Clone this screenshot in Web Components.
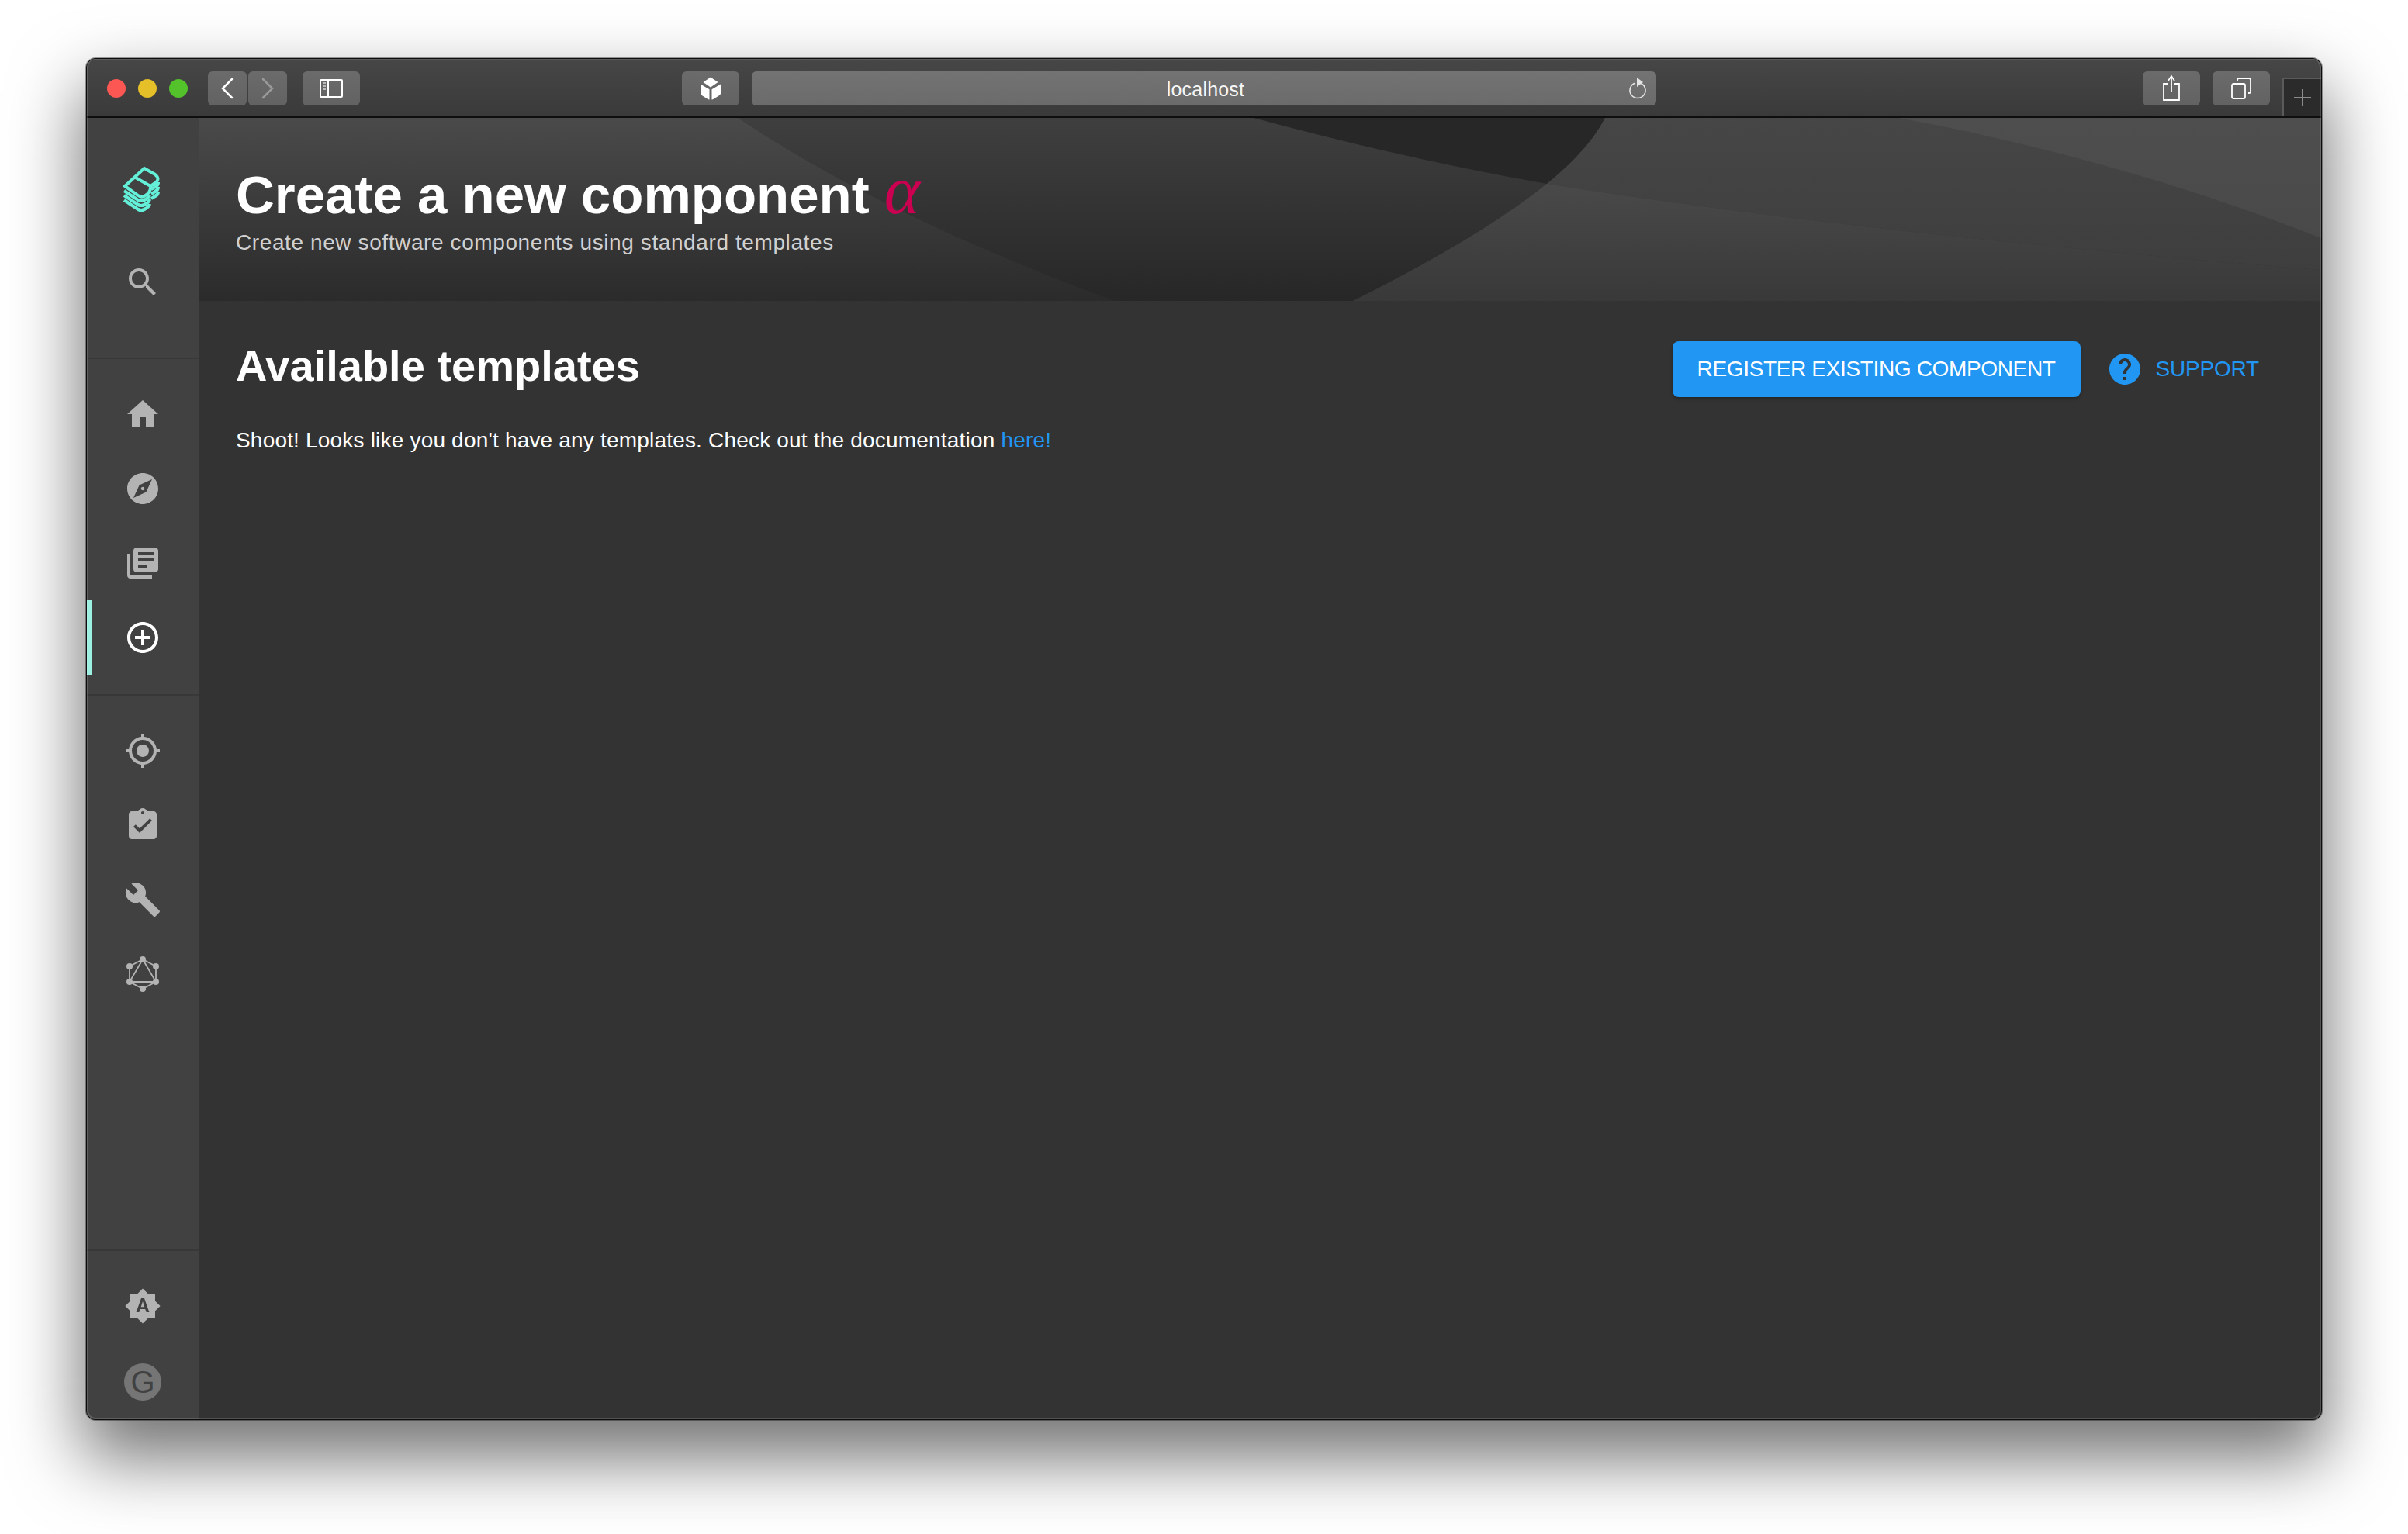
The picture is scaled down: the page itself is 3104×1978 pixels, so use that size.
<!DOCTYPE html>
<html>
<head>
<meta charset="utf-8">
<title>Create a new component</title>
<style>
html,body{margin:0;padding:0;background:#fff;height:100%;overflow:hidden;}
body{font-family:"Liberation Sans",Arial,sans-serif;}
</style>
</head>
<body>
<mac-window>
    <browser-bar slot="bar"></browser-bar>
    <side-nav slot="side"></side-nav>
    <page-header slot="head" title="Create a new component" subtitle="Create new software components using standard templates"></page-header>
    <templates-page slot="main"></templates-page>
</mac-window>

<script>
const ICONS = {
    search:'M15.5 14h-.79l-.28-.27C15.41 12.59 16 11.11 16 9.5 16 5.91 13.09 3 9.5 3S3 5.91 3 9.5 5.91 16 9.5 16c1.61 0 3.09-.59 4.23-1.57l.27.28v.79l5 4.99L20.49 19l-4.99-5zm-6 0C7.01 14 5 11.99 5 9.5S7.01 5 9.5 5 14 7.01 14 9.5 11.99 14 9.5 14z',
    home:'M10 20v-6h4v6h5v-8h3L12 3 2 12h3v8z',
    explore:'M12 10.9c-.61 0-1.1.49-1.1 1.1s.49 1.1 1.1 1.1c.61 0 1.1-.49 1.1-1.1s-.49-1.1-1.1-1.1zM12 2C6.48 2 2 6.48 2 12s4.48 10 10 10 10-4.48 10-10S17.52 2 12 2zm2.19 12.19L6 18l3.81-8.19L18 6l-3.81 8.19z',
    library:'M4 6H2v14c0 1.1.9 2 2 2h14v-2H4V6zm16-4H8c-1.1 0-2 .9-2 2v12c0 1.1.9 2 2 2h12c1.1 0 2-.9 2-2V4c0-1.1-.9-2-2-2zm-1 9H9V9h10v2zm-4 4H9v-2h6v2zm4-8H9V5h10v2z',
    add:'M13 7h-2v4H7v2h4v4h2v-4h4v-2h-4V7zm-1-5C6.48 2 2 6.48 2 12s4.48 10 10 10 10-4.48 10-10S17.52 2 12 2zm0 18c-4.41 0-8-3.59-8-8s3.59-8 8-8 8 3.59 8 8-3.59 8-8 8z',
    gps:'M12 8c-2.21 0-4 1.79-4 4s1.79 4 4 4 4-1.79 4-4-1.79-4-4-4zm8.94 3c-.46-4.17-3.77-7.48-7.94-7.94V1h-2v2.06C6.83 3.52 3.52 6.83 3.06 11H1v2h2.06c.46 4.17 3.77 7.48 7.94 7.94V23h2v-2.06c4.17-.46 7.48-3.77 7.94-7.94H23v-2h-2.06zM12 19c-3.87 0-7-3.13-7-7s3.13-7 7-7 7 3.13 7 7-3.13 7-7 7z',
    assignment:'M19 3h-4.18C14.4 1.84 13.3 1 12 1c-1.3 0-2.4.84-2.82 2H5c-1.1 0-2 .9-2 2v14c0 1.1.9 2 2 2h14c1.1 0 2-.9 2-2V5c0-1.1-.9-2-2-2zm-7 0c.55 0 1 .45 1 1s-.45 1-1 1-1-.45-1-1 .45-1 1-1zm-2 14l-4-4 1.41-1.41L10 14.17l6.59-6.59L18 9l-8 8z',
    build:'M22.7 19l-9.1-9.1c.9-2.3.4-5-1.5-6.9-2-2-5-2.4-7.4-1.3L9 6 6 9 1.6 4.7C.4 7.1.9 10.1 2.9 12.1c1.9 1.9 4.6 2.4 6.9 1.5l9.1 9.1c.4.4 1 .4 1.4 0l2.3-2.3c.5-.4.5-1.1.1-1.4z',
    brightness:'M10.85 12.65h2.3L12 9l-1.15 3.65zM20 8.69V4h-4.69L12 .69 8.69 4H4v4.69L.69 12 4 15.31V20h4.69L12 23.31 15.31 20H20v-4.69L23.31 12 20 8.69zM14.3 16l-.7-2h-3.2l-.7 2H7.8L11 7h2l3.2 9h-1.9z',
    help:'M12 2C6.48 2 2 6.48 2 12s4.48 10 10 10 10-4.48 10-10S17.52 2 12 2zm1 17h-2v-2h2v2zm2.07-7.75l-.9.92C13.45 12.9 13 13.5 13 15h-2v-.5c0-1.1.45-2.1 1.17-2.83l1.24-1.26c.37-.36.59-.86.59-1.41 0-1.1-.9-2-2-2s-2 .9-2 2H8c0-2.21 1.79-4 4-4s4 1.79 4 4c0 .88-.36 1.68-.93 2.25z'
};

class MatIcon extends HTMLElement {
    constructor(){
        super();
        this.attachShadow({mode:'open'});
    }
    connectedCallback(){
        const name = this.getAttribute('name');
        this.shadowRoot.innerHTML = `
        <style>
            :host{display:block;width:48px;height:48px;color:inherit;}
            svg{display:block;width:100%;height:100%;fill:currentColor;}
        </style>
        <svg viewBox="0 0 24 24"><path d="${ICONS[name]}"/></svg>`;
    }
}
customElements.define('mat-icon', MatIcon);

class MacWindow extends HTMLElement {
    constructor(){
        super();
        this.attachShadow({mode:'open'});
        this.shadowRoot.innerHTML = `
        <style>
            :host{display:block;box-sizing:border-box;width:100%;height:100vh;padding:75px 111px 147px;}
            .win{
                position:relative;
                height:100%;
                box-sizing:border-box;
                display:flex;
                flex-direction:column;
                border:1px solid #0c0c0c;
                border-radius:12px;
                overflow:hidden;
                background:#333;
                box-shadow:0 0 0 1px rgba(0,0,0,.35),0 44px 90px 6px rgba(0,0,0,.55);
            }
            /* thin lighter rim that macOS draws inside the frame */
            .win::after{
                content:"";position:absolute;inset:0;pointer-events:none;
                border:2px solid rgba(255,255,255,.16);border-top:0;border-radius:11px;
            }
            .body{flex:1;display:flex;min-height:0;}
            .col{flex:1;display:flex;flex-direction:column;min-width:0;}
            ::slotted([slot=main]){flex:1;}
        </style>
        <div class="win">
            <slot name="bar"></slot>
            <div class="body">
                <slot name="side"></slot>
                <div class="col">
                    <slot name="head"></slot>
                    <slot name="main"></slot>
                </div>
            </div>
        </div>`;
    }
}
customElements.define('mac-window', MacWindow);

class BarButton extends HTMLElement {
    constructor(){
        super();
        this.attachShadow({mode:'open'});
        this.shadowRoot.innerHTML = `
        <style>
            :host{
                display:flex;align-items:center;justify-content:center;
                box-sizing:border-box;height:44px;width:var(--w,74px);
                border-radius:6px;
                background:linear-gradient(#6b6b6b,#626262);
            }
        </style>
        <slot></slot>`;
    }
}
customElements.define('bar-button', BarButton);

class BrowserBar extends HTMLElement {
    constructor(){
        super();
        this.attachShadow({mode:'open'});
        this.shadowRoot.innerHTML = `
        <style>
            :host{
                display:flex;align-items:center;position:relative;
                box-sizing:border-box;height:76px;flex:none;
                padding:0 0 0 26px;
                background:linear-gradient(#464646,#3a3a3a);
                border-top:2px solid #5c5c5c;
                border-bottom:2px solid #0e0e0e;
            }
            .dot{width:24px;height:24px;border-radius:50%;margin-right:16px;}
            .nav{display:flex;gap:2px;margin-left:10px;margin-right:20px;}
            .side{margin-right:415px;}
            .url{
                width:1166px;height:44px;margin-left:16px;margin-right:627px;
                box-sizing:border-box;border-radius:6px;padding:2px 0 0 4px;
                background:linear-gradient(#737373,#6b6b6b);color:#f6f6f6;
                display:flex;align-items:center;justify-content:center;
                position:relative;font-size:25px;letter-spacing:.2px;
            }
            .url svg{position:absolute;right:12px;top:7px;}
            .right{margin-right:16px;}
            .newtab{
                position:absolute;right:0;bottom:0;
                width:50px;height:50px;box-sizing:border-box;
                background:#2b2b2b;
                border-left:2px solid #5a5a5a;border-top:2px solid #5a5a5a;
                display:flex;align-items:center;justify-content:center;
            }
            svg{display:block;}
        </style>
        <span class="dot" style="background:#fc5753"></span>
        <span class="dot" style="background:#e6c029"></span>
        <span class="dot" style="background:#53c22b"></span>
        <div class="nav">
            <bar-button style="--w:50px">
                <svg width="20" height="30" viewBox="0 0 20 30" fill="none" stroke="#fff" stroke-width="2.5" stroke-linecap="round"><path d="M16 3 L4 15 L16 27"/></svg>
            </bar-button>
            <bar-button style="--w:50px">
                <svg width="20" height="30" viewBox="0 0 20 30" fill="none" stroke="#999" stroke-width="2.5" stroke-linecap="round"><path d="M4 3 L16 15 L4 27"/></svg>
            </bar-button>
        </div>
        <bar-button class="side">
            <svg width="30" height="24" viewBox="0 0 30 24" fill="none" stroke="#fff" stroke-width="2"><rect x="1" y="1" width="28" height="22" rx="1"/><path d="M11 1v22"/><path d="M4 5h4M4 9h4M4 13h4" stroke="#bbb" stroke-width="2"/></svg>
        </bar-button>
        <bar-button>
            <svg width="30" height="30" viewBox="0 0 30 30" fill="#fff"><path d="M15 .5l9.500 6.500-9.500 6.500-9.500-6.500z"/><path d="M2 9.500l11.500 6.800v13.200c-1 0-1.800-.3-2.700-.9l-7.100-4.600c-1.100-.7-1.700-1.700-1.700-3z"/><path d="M28 9.500l-11.500 6.800v13.200c1 0 1.800-.3 2.700-.9l7.100-4.600c1.100-.7 1.700-1.700 1.700-3z"/></svg>
        </bar-button>
        <div class="url">
            <span>localhost</span>
            <svg width="24" height="30" viewBox="0 0 24 30" fill="none" stroke="#e4e4e4" stroke-width="1.600"><path d="M9 8a10 10 0 1 0 6 0"/><path d="M11 1l8 6-8 6z" fill="#e4e4e4" stroke="none"/></svg>
        </div>
        <bar-button class="right">
            <svg width="24" height="38" viewBox="0 0 24 38" fill="none" stroke="#fff" stroke-width="1.800"><path d="M8 13H2v21h20V13h-6"/><path d="M12 24V4M8 9l4-6 4 6"/></svg>
        </bar-button>
        <bar-button>
            <svg width="28" height="28" viewBox="0 0 28 28" fill="none" stroke="#fff" stroke-width="1.800"><rect x="2" y="8" width="17" height="19" rx="2"/><path d="M9 4V3c0-1 1-2 2-2h13c1 0 2 1 2 2v15c0 1-1 2-2 2h-1"/></svg>
        </bar-button>
        <div class="newtab">
            <svg width="22" height="22" viewBox="0 0 22 22" stroke="#8a8a8a" stroke-width="2"><path d="M11 0v22M0 11h22"/></svg>
        </div>`;
    }
}
customElements.define('browser-bar', BrowserBar);

class NavItem extends HTMLElement {
    constructor(){
        super();
        this.attachShadow({mode:'open'});
        this.shadowRoot.innerHTML = `
        <style>
            :host{
                display:flex;align-items:center;justify-content:center;
                height:96px;width:100%;position:relative;
                color:#b3b3b3;
            }
            :host([active]){color:#fff;}
            :host([active])::before{
                content:"";position:absolute;left:0;top:0;bottom:0;width:6px;background:#9bf0e1;
            }
        </style>
        <slot></slot>`;
    }
}
customElements.define('nav-item', NavItem);

class SideNav extends HTMLElement {
    constructor(){
        super();
        this.attachShadow({mode:'open'});
        const layers = [6,12,18].map(d => `<path d="M4 ${28+d} L22 ${40+d} Q26 ${42+d} 30 ${40+d} Q36 ${37+d} 37 ${33+d}"/>`).join('');
        const lobes = [6,12,18].map(d => `<path d="M39 ${26+d} L44 ${23+d} Q48 ${21+d} 48 ${17+d}"/>`).join('');
        this.shadowRoot.innerHTML = `
        <style>
            :host{
                display:flex;flex-direction:column;flex:none;
                width:144px;height:100%;box-sizing:border-box;
                background:#414141;
            }
            .top{height:309px;display:flex;flex-direction:column;align-items:center;flex:none;box-sizing:border-box;padding-top:60px;}
            .logo{display:block;width:52px;height:66px;margin-left:-4px;flex:none;}
            .search{margin-top:62px;color:#b3b3b3;}
            .group{padding:23px 0 25px;border-top:2px solid #383838;}
            .spacer{flex:1;}
            .bottom{border-top:2px solid #383838;display:flex;flex-direction:column;align-items:center;height:219px;box-sizing:border-box;padding-top:47px;}
            .avatar{
                width:48px;height:48px;border-radius:50%;margin-top:50px;flex:none;
                background:#757575;color:#414141;
                display:flex;align-items:center;justify-content:center;
                font-size:40px;
            }
        </style>
        <div class="top">
            <svg class="logo" viewBox="0 0 52 66" fill="none" stroke="#64f0d8" stroke-width="4.200">
                ${layers}
                ${lobes}
                <path stroke-width="4" d="M30 5 L44 13 Q51 19 44 24 L38 28 Q39 36 30 41 Q26 43 22 40 L5 28 Z M17 16 L38 28"/>
            </svg>
            <mat-icon class="search" name="search"></mat-icon>
        </div>
        <div class="group">
            <nav-item><mat-icon name="home"></mat-icon></nav-item>
            <nav-item><mat-icon name="explore"></mat-icon></nav-item>
            <nav-item><mat-icon name="library"></mat-icon></nav-item>
            <nav-item active><mat-icon name="add"></mat-icon></nav-item>
        </div>
        <div class="group">
            <nav-item><mat-icon name="gps"></mat-icon></nav-item>
            <nav-item><mat-icon name="assignment"></mat-icon></nav-item>
            <nav-item><mat-icon name="build"></mat-icon></nav-item>
            <nav-item>
                <svg width="48" height="48" viewBox="0 0 48 48" fill="#b3b3b3" stroke="#b3b3b3">
                    <path fill="none" stroke-width="1.800" d="M24 5 L41 14 V34 L24 43 L7 34 V14 Z"/>
                    <path fill="none" stroke-width="1.800" d="M24 5 L41 34 H7 Z"/>
                    <g stroke="none">
                        <circle cx="24" cy="5" r="4"/><circle cx="41" cy="14" r="4"/><circle cx="41" cy="34" r="4"/>
                        <circle cx="24" cy="43" r="4"/><circle cx="7" cy="34" r="4"/><circle cx="7" cy="14" r="4"/>
                    </g>
                </svg>
            </nav-item>
        </div>
        <div class="spacer"></div>
        <div class="bottom">
            <mat-icon name="brightness" style="color:#b3b3b3"></mat-icon>
            <div class="avatar">G</div>
        </div>`;
    }
}
customElements.define('side-nav', SideNav);

class PageHeader extends HTMLElement {
    constructor(){
        super();
        this.attachShadow({mode:'open'});
    }
    connectedCallback(){
        this.shadowRoot.innerHTML = `
        <style>
            :host{
                display:block;position:relative;flex:none;height:236px;overflow:hidden;
                background:#333;
            }
            svg.bg{position:absolute;left:0;top:0;width:100%;height:100%;}
            .txt{position:relative;padding:50px 48px 0;}
            h1{margin:0;font-size:69px;line-height:100px;font-weight:700;color:#fff;white-space:nowrap;}
            h1 span{font-family:"Liberation Serif",serif;font-style:italic;font-weight:400;color:#cc0051;font-size:88px;line-height:60px;}
            p{margin:-9px 0 0;font-size:28px;line-height:40px;color:#d0d0d0;letter-spacing:.6px;}
        </style>
        <svg class="bg" viewBox="0 0 2736 236" preserveAspectRatio="none">
            <defs>
                <linearGradient id="left" x1="0" y1="0" x2="0" y2="1">
                    <stop offset="0" stop-color="#4a4a4a"/><stop offset="1" stop-color="#2b2b2b"/>
                </linearGradient>
                <linearGradient id="mid" x1="0" y1="0" x2="0" y2="1">
                    <stop offset="0" stop-color="#3f3f3f"/><stop offset="1" stop-color="#272727"/>
                </linearGradient>
                <linearGradient id="low" x1="0" y1="0" x2="0" y2="1">
                    <stop offset="0" stop-color="#494949"/><stop offset="1" stop-color="#393939"/>
                </linearGradient>
                <linearGradient id="up" x1="0" y1="0" x2="0" y2="1">
                    <stop offset="0" stop-color="#464646"/><stop offset="1" stop-color="#3e3e3e"/>
                </linearGradient>
                <linearGradient id="far" x1="0" y1="0" x2="0" y2="1">
                    <stop offset="0" stop-color="#4e4e4e"/><stop offset="1" stop-color="#494949"/>
                </linearGradient>
            </defs>
            <rect width="2736" height="236" fill="url(#left)"/>
            <path d="M695 0 Q880 125 1180 236 H1488 Q1765 98 1813 0 Z" fill="url(#mid)"/>
            <path d="M1360 0 Q1560 54 1738 85 Q1793.800 39.200 1813 0 Z" fill="#272727"/>
            <path d="M1738 85 Q2150 150 2736 196 V236 H1488 Q1654 153 1738 85 Z" fill="url(#low)"/>
            <path d="M1813 0 Q1793.800 39.200 1738 85 Q2150 150 2736 196 V0 Z" fill="url(#up)"/>
            <path d="M2192 0 Q2475 52 2736 155 V0 Z" fill="url(#far)"/>
        </svg>
        <div class="txt">
            <h1>${this.getAttribute('title')} <span>α</span></h1>
            <p>${this.getAttribute('subtitle')}</p>
        </div>`;
    }
}
customElements.define('page-header', PageHeader);

class TemplatesPage extends HTMLElement {
    constructor(){
        super();
        this.attachShadow({mode:'open'});
        this.shadowRoot.innerHTML = `
        <style>
            :host{display:block;background:#333;color:#fff;padding:48px 48px 0;box-sizing:border-box;}
            .row{display:flex;align-items:flex-start;}
            h2{margin:4px 0 0;font-size:56px;line-height:64px;font-weight:700;flex:1;white-space:nowrap;}
            .btn{
                margin-top:4px;height:72px;box-sizing:border-box;padding:0 32px;
                background:#2196f3;color:#fff;border-radius:8px;
                display:flex;align-items:center;font-size:28px;letter-spacing:-.35px;white-space:nowrap;
                box-shadow:0 2px 4px rgba(0,0,0,.3);
            }
            .sup{
                margin-top:4px;height:72px;box-sizing:border-box;padding:0 32px 0 33px;
                color:#2196f3;display:flex;align-items:center;gap:16px;font-size:28px;letter-spacing:-.2px;
            }
            p{margin:36px 0 0;font-size:28px;line-height:40px;letter-spacing:.19px;}
            a{color:#2196f3;text-decoration:none;}
        </style>
        <div class="row">
            <h2>Available templates</h2>
            <div class="btn">REGISTER EXISTING COMPONENT</div>
            <div class="sup"><mat-icon name="help"></mat-icon><span>SUPPORT</span></div>
        </div>
        <p>Shoot! Looks like you don't have any templates. Check out the documentation <a href="#">here!</a></p>`;
    }
}
customElements.define('templates-page', TemplatesPage);
</script>
</body>
</html>
